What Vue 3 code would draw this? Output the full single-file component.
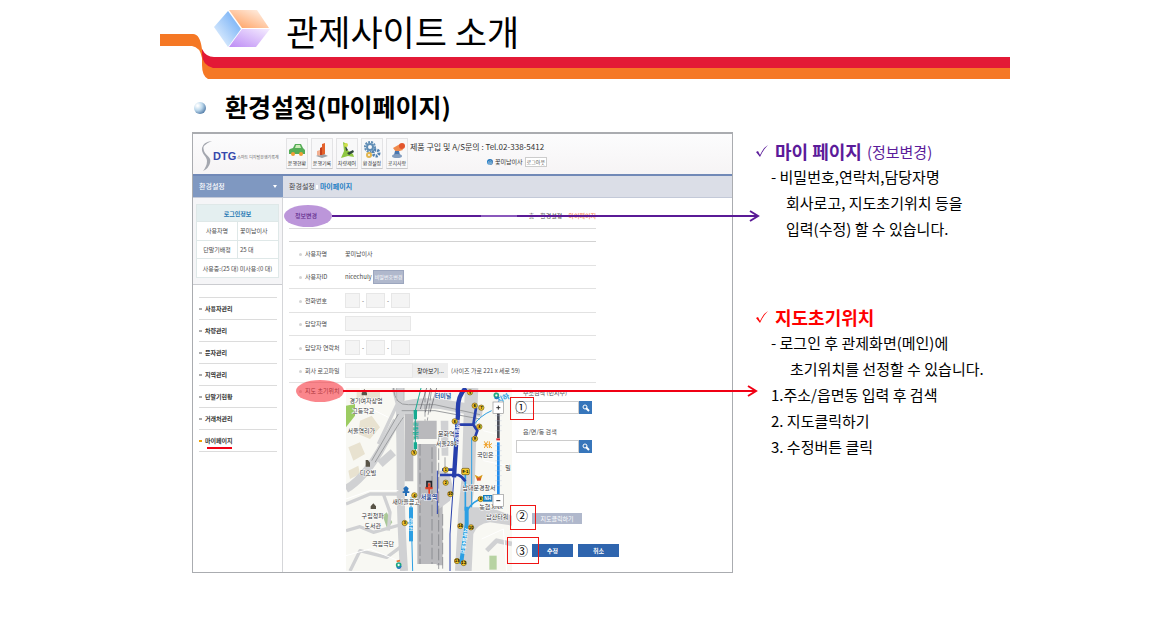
<script setup>
import { ref } from 'vue'

const shortcuts = ['운행현황', '운행기록', '차량제어', '환경설정', '공지사항']
const menu = ['사용자관리', '차량관리', '문자관리', '지역관리', '단말기현황', '거래처관리', '마이페이지']
const address = ref('')
const district = ref('')

const places = [
  { x: 78, y: 58, t: '경기여자상업' },
  { x: 70, y: 86, t: '고등학교' },
  { x: 64, y: 147, t: '서울역리가' },
  { x: 84, y: 274, t: '디오빌' },
  { x: 198, y: 360, t: '새마을금고' },
  { x: 98, y: 402, t: '구립청파' },
  { x: 98, y: 431, t: '도서관' },
  { x: 129, y: 485, t: '국립극단' },
  { x: 319, y: 157, t: '문화역' },
  { x: 319, y: 185, t: '서울284' },
  { x: 436, y: 219, t: '국민은' },
  { x: 417, y: 318, t: '남대문경찰서' },
  { x: 453, y: 376, t: '농협 XNX' },
  { x: 472, y: 405, t: '남산타워' },
  { x: 504, y: 258, t: '밀' }
]
const exits = [
  [390, 25, '5'], [404, 65, '6'], [424, 71, '7'], [344, 112, '8'], [418, 128, '8'], [405, 164, '9'],
  [222, 206, '5'], [317, 257, '1'], [317, 296, '2'], [331, 330, '10'], [223, 334, '4'], [194, 417, '3'],
  [361, 426, '14'], [393, 430, '10'], [351, 531, '13'], [371, 537, '12'], [422, 345, '8']
]
</script>

<template>
  <main class="slide">
    <header class="banner">
      <svg class="ribbon" width="850" height="80" viewBox="0 0 850 80" aria-hidden="true">
        <path fill="#f57825" d="M0 34H33Q40 34 42 49Q44 60 55 61H850V79H48Q42 76 42 65V58Q40 47 32 46H0Z" />
        <path fill="#e31936" d="M42 49Q46 57 54 57H850V68H53Q42 65 42 54Z" />
      </svg>
      <svg class="cube" width="56" height="38" viewBox="0 0 56 38" aria-hidden="true">
        <defs>
          <linearGradient id="cb" x1="1" y1="0" x2="0" y2="1"><stop offset="0" stop-color="#62a5f5" /><stop offset="1" stop-color="#f4faff" /></linearGradient>
          <linearGradient id="co" x1="0" y1="1" x2="1" y2="0"><stop offset="0" stop-color="#ff9a57" /><stop offset="1" stop-color="#fff8f2" /></linearGradient>
          <linearGradient id="cp" x1="0" y1="1" x2="1" y2="0"><stop offset="0" stop-color="#bd8cf5" /><stop offset="1" stop-color="#f5edff" /></linearGradient>
        </defs>
        <path fill="url(#cb)" d="M14 1L27 19L14 37L0 17Z" />
        <path fill="url(#co)" d="M15 0H43L55 18H28Z" />
        <path fill="url(#cp)" d="M28 19H56L42 37H15Z" />
      </svg>
      <h1>관제사이트 소개</h1>
    </header>

    <h2><i class="ball"></i>환경설정(마이페이지)</h2>

    <div class="body">
      <section class="app">
        <div class="app-top">
          <div class="brand">
            <svg width="12" height="32" viewBox="0 0 12 32" aria-hidden="true"><path d="M11 1Q0 5 3 11C5 16 11 17 9 23Q8 28 2 31Q6 26 6 21C6 16 0 14 1 8Q2 2 11 1Z" fill="#a4a7af" /></svg>
            <b>DTG</b><small>스마트 디지털운행기록계</small>
          </div>
          <nav class="shortcuts">
            <button v-for="(s, i) in shortcuts" :key="s" type="button">
              <svg width="18" height="18" viewBox="0 0 18 18" aria-hidden="true">
                <g v-if="i === 0"><path d="M2 8L5 7L7 3H13L15 7L17 9V13H1V9Z" fill="#55ad57" /><path d="M7 7L8 4H12L13 7Z" fill="#cdebb9" /><circle cx="5" cy="13" r="2" fill="#ef9d35" /><circle cx="13" cy="13" r="2" fill="#ef9d35" /></g>
                <g v-else-if="i === 1"><path d="M3 15L9 12L15 15L9 17Z" fill="#9da3aa" /><path d="M4 10L7 9V15L4 14Z" fill="#f2b092" /><path d="M9 3L12 2V13L9 14Z" fill="#e4622b" /><path d="M7 7L9 6V14H7Z" fill="#c4401f" /></g>
                <g v-else-if="i === 2"><path d="M5 1L9 3L8 8L15 13L16 16L10 15L3 17L6 10Z" fill="#8fc742" /><path d="M7 4L10 9L8 10ZM9 12L15 9L16 11L11 14Z" fill="#31493c" /><circle cx="8" cy="4" r="2" fill="#d0df4c" /></g>
                <g v-else-if="i === 3"><circle cx="7" cy="6" r="5" fill="none" stroke="#608db5" stroke-width="2" stroke-dasharray="2 1" /><circle cx="7" cy="6" r="3" fill="none" stroke="#608db5" stroke-width="2" /><circle cx="13" cy="12" r="3" fill="none" stroke="#4f80b0" stroke-width="3" stroke-dasharray="2 1" /><circle cx="6" cy="14" r="2" fill="none" stroke="#e2b650" stroke-width="2" /></g>
                <g v-else><path d="M5 7L12 3L15 9L8 11Z" fill="#f08a4d" /><circle cx="14" cy="5" r="3" fill="#e3562d" /><path d="M7 10H11L12 14H6Z" fill="#4a76ae" /><ellipse cx="9" cy="15" rx="5" ry="2" fill="#829dc0" /></g>
              </svg>
              {{ s }}
            </button>
          </nav>
          <div class="contact">
            <p>제품 구입 및 A/S문의 : Tel.02-338-5412</p>
            <p class="user"><i>@</i><span>꽃미남이사</span><button type="button">로그아웃</button></p>
          </div>
        </div>

        <div class="crumbs">
          <strong>환경설정<svg width="4" height="3" viewBox="0 0 4 3" aria-hidden="true"><path d="M0 0H4L2 3Z" fill="#fff" /></svg></strong>
          <p>환경설정 <i></i> <b>마이페이지</b></p>
        </div>

        <div class="app-main">
          <aside>
            <div class="login">
              <table>
                <thead><tr><th colspan="2">로그인정보</th></tr></thead>
                <tbody>
                  <tr><td class="key">사용자명</td><td>꽃미남이사</td></tr>
                  <tr><td class="key">단말기배정</td><td>25 대</td></tr>
                  <tr><td colspan="2" class="use">사용중:(25 대) 미사용:(0 대)</td></tr>
                </tbody>
              </table>
            </div>
            <ul>
              <li v-for="m in menu" :key="m"><a href="#" :class="{ on: m === '마이페이지' }"><span>{{ m }}</span></a></li>
            </ul>
          </aside>

          <form class="content" @submit.prevent>
            <div class="section-head"><b>정보변경</b><p>홈 · 환경설정 · <em>마이페이지</em></p></div>
            <div class="rows">
              <div class="row"><span class="name">사용자명</span><span>꽃미남이사</span></div>
              <div class="row"><span class="name">사용자ID</span><span>nicechuly</span><button type="button" class="pw">비밀번호변경</button></div>
              <div class="row"><label class="name" for="tel">전화번호</label><input id="tel" class="w1"><u>-</u><input class="w2" aria-label="전화번호 국번"><u>-</u><input class="w2" aria-label="전화번호 끝자리"></div>
              <div class="row"><label class="name" for="manager">담당자명</label><input id="manager" class="w3"></div>
              <div class="row"><label class="name" for="mtel">담당자 연락처</label><input id="mtel" class="w1"><u>-</u><input class="w2" aria-label="연락처 국번"><u>-</u><input class="w2" aria-label="연락처 끝자리"></div>
              <div class="row"><label class="name" for="logo">회사 로고파일</label><input id="logo" class="w4"><button type="button" class="browse">찾아보기...</button><small>(사이즈 가로 221 x 세로 59)</small></div>
            </div>

            <div class="map-row">
              <span class="name">지도 초기위치</span>
              <svg class="map" width="166" height="183" viewBox="18 12 498 549" role="img" aria-label="서울역 지도">
                <rect x="18" y="12" width="498" height="549" fill="#f8f8f3" />
                <g fill="#e8e2d0">
                  <path d="M60 110L95 95L120 130L90 165L55 150ZM25 190L60 175L75 210L40 230ZM50 20H120V45H50ZM25 260L55 245L60 270L30 285Z" />
                </g>
                <path d="M18 65L45 60V95L18 130Z" fill="#9ccc62" />
                <path d="M128 395L140 385L157 415L142 435Z" fill="#a9c899" />
                <path d="M448 515H470V557H448Z" fill="#b7d3a2" />
                <g fill="none" stroke="#d0d1d3" stroke-linejoin="round">
                  <path stroke-width="24" d="M180 12V120Q182 200 182 300T192 561" />
                  <path stroke-width="10" d="M160 12L172 60L115 180" />
                  <path stroke-width="24" d="M170 110L120 200Q70 285 18 315M120 240L160 205" />
                  <path stroke-width="10" d="M18 360L90 330H180M18 440L60 428L100 445L190 420M130 330L150 385L145 440M30 561L60 500L140 520L180 490" />
                  <path stroke-width="40" d="M395 12L390 120L385 280L375 380L365 561" />
                  <path stroke-width="14" d="M440 500L470 470L516 480" />
                </g>
                <path d="M395 370L450 370L516 395V425L450 415Q410 420 400 450L395 561H360L375 380Z" fill="#d0d1d3" />
                <path d="M180 55Q230 38 300 45L430 65L425 100L300 75Q230 65 200 110Z" fill="#d0d1d3" />
                <g fill="none" stroke="#fff" stroke-width="3">
                  <path d="M18 345L90 320H175M60 12L95 75L145 100M18 515L90 495L175 530M425 465L490 435L500 561M430 230L500 245M430 140L470 150" />
                </g>
                <g fill="none" stroke="#9c9ea0" stroke-width="3">
                  <path d="M160 12Q165 65 205 62H285L420 92M185 80H285L420 105M190 100Q175 120 105 235M175 90L95 230" />
                  <path d="M170 12V50M192 12V50" stroke="#bbb" />
                </g>
                <path d="M194 90H220V292H194ZM222 110H290V165H222ZM232 180H290V540H232ZM290 350H308V544H290Z" fill="#b9b9bc" />
                <path d="M290 260H320Q348 300 330 350L290 380Z" fill="#cfcfd2" />
                <path d="M302 110H325V215H305Z" fill="#d0d1d3" />
                <g fill="none" stroke="#77787e" stroke-width="2" stroke-dasharray="35 8"><path d="M240 180V540M255 20V110M275 15L262 110M276 190V540M296 150V555M315 220V270M308 390V561" /></g>
                <g fill="none" stroke="#57585f" stroke-width="2"><path d="M241 75L260 12M256 85L272 12M270 85L290 12" /></g>
                <g fill="none" stroke="#16aa91"><path stroke-width="3" d="M243 12L226 80V205" /><path stroke-width="10" d="M226 78V106M226 175V195" /></g>
                <g fill="none" stroke="#2c9fe3"><path stroke-width="3" d="M213 340V370L218 561M192 417H213M395 160V370M400 125Q420 95 455 80" /><path stroke-width="12" d="M213 370V472" /><path stroke-width="5" d="M430 342Q400 350 382 378" /><path stroke-width="5" d="M376 265V380" /><path stroke-width="12" d="M380 368V420L363 540" /></g>
                <g fill="none" stroke="#273fac"><path stroke-width="13" d="M378 12Q350 35 354 90L342 280" /><path stroke-width="8" d="M300 273H355Q368 278 376 292M306 257H340M348 122H400L408 72M400 122L412 140L405 160" /><path stroke-width="3" d="M342 275L330 450V561M292 260V390" /></g>
                <g font-family="'Noto Sans CJK KR', sans-serif" font-size="16" text-anchor="middle">
                  <g font-size="15" font-weight="700"><text x="222" y="141" fill="#16aa91" transform="rotate(90 222 141)">공항철도</text><text x="346" y="145" fill="#fff" transform="rotate(92 346 145)">지하철1호선</text><text x="208" y="421" fill="#fff" transform="rotate(90 208 421)">경의선</text><text x="368" y="470" fill="#fff" transform="rotate(98 368 470)">지하철4호선</text><text x="492" y="50" font-size="22" fill="#2c9fe3" transform="rotate(-25 492 50)">지하</text></g>
                  <g fill="#333" stroke="#fff" stroke-width="3" paint-order="stroke">
                    <text v-for="p in places" :key="p.t" :x="p.x" :y="p.y" font-size="18">{{ p.t }}</text>
                    <text x="309" y="41" font-size="18" font-weight="700" fill="#19549a">터미널</text>
                    <text x="267" y="346" font-size="18" font-weight="700" fill="#244591">서울역</text>
                  </g>
                  <g v-for="e in exits" :key="e[0] + '-' + e[1]"><circle :cx="e[0]" :cy="e[1]" r="8" fill="#f4ca2d" stroke="#705715" stroke-width="2" /><text :x="e[0]" :y="e[1] + 4" font-size="12" font-weight="700">{{ e[2] }}</text></g>
                  <rect x="365" y="253" width="23" height="19" rx="4" fill="#f4ca2d" stroke="#705715" stroke-width="2" /><text x="376" y="267" font-size="12" font-weight="700">9-1</text>
                </g>
                <g fill="#595447"><path d="M65 27L73 15L81 27V34H65ZM77 244V228H84L90 236V248H77ZM92 375V367L100 358L108 367V375Z" /></g>
                <path d="M256 308H278V316H270V329H265V316H256Z" fill="#e44227" /><path d="M261 310V293H274V310" fill="none" stroke="#23242a" stroke-width="5" /><path d="M264 298H271V308H264Z" fill="#e44227" />
                <path d="M198 306L206 313L203 322H208V327H201V336H195V327H188V322H193L190 313Z" fill="#246eb7" />
                <g fill="none" stroke-width="5"><circle cx="176" cy="543" r="6" stroke="#1da783" /><path d="M171 549Q178 558 183 546" stroke="#2278c1" /><path d="M170 532L180 530" stroke="#e87232" /><circle cx="469" cy="34" r="6" stroke="#1da783" /><path d="M464 40Q471 48 476 38" stroke="#2278c1" /><path d="M464 23L474 21" stroke="#e87232" /></g>
                <path d="M433 172L443 192M443 172L433 192M431 182H446M448 172V192M448 185L456 178M448 185L456 192" fill="none" stroke="#efa027" stroke-width="3" />
                <path d="M404 272L416 278L428 272L422 288H411Z" fill="#d79a18" /><path d="M411 281H422V290H411Z" fill="#d9532c" />
                <rect x="429" y="333" width="28" height="20" fill="#167bbb" /><text x="443" y="348" font-family="sans-serif" font-size="14" font-weight="700" fill="#fff" text-anchor="middle">NH</text>
                <rect x="471" y="86" width="8" height="76" fill="#4b4d57" /><rect x="471" y="175" width="8" height="157" fill="#228ced" /><path d="M465 95H485M465 110H485M465 125H485M465 140H485M465 185H485M465 200H485M465 215H485M465 230H485M465 245H485M465 260H485M465 275H485M465 290H485M465 305H485" stroke="#a9bad0" stroke-width="1" /><rect x="469" y="163" width="11" height="6" fill="#d9232c" />
                <g fill="#fff" stroke="#969696" stroke-width="2"><rect x="459" y="54" width="31" height="34" /><rect x="459" y="331" width="31" height="36" /></g><path d="M469 71H481M475 65V77M469 350H481" stroke="#333" stroke-width="3" />
              </svg>
              <div class="find">
                <label for="addr">주소검색 (번지수)</label>
                <div class="search"><input id="addr" v-model="address"><button type="button" aria-label="주소 검색"><svg width="8" height="8" viewBox="0 0 8 8"><circle cx="3" cy="3" r="2" fill="none" stroke="#fff" /><path d="M4 4L7 7" stroke="#fff" stroke-width="2" /></svg></button></div>
                <label for="dong" class="second">읍/면/동 검색</label>
                <div class="search"><input id="dong" v-model="district"><button type="button" aria-label="읍/면/동 검색"><svg width="8" height="8" viewBox="0 0 8 8"><circle cx="3" cy="3" r="2" fill="none" stroke="#fff" /><path d="M4 4L7 7" stroke="#fff" stroke-width="2" /></svg></button></div>
                <button type="button" class="pick">지도클릭하기</button>
                <div class="actions"><button type="submit">수정</button><button type="button">취소</button></div>
              </div>
            </div>
          </form>
        </div>
      </section>

      <section class="notes">
        <article class="mypage">
          <h3><svg width="14" height="14" viewBox="0 0 14 14" aria-hidden="true"><path d="M1 8L3 7L5 11Q8 4 13 1Q8 6 5 13Z" fill="currentColor" /></svg>마이 페이지<small>(정보변경)</small></h3>
          <p>- 비밀번호,연락처,담당자명</p>
          <p class="in">회사로고, 지도초기위치 등을</p>
          <p class="in">입력(수정) 할 수 있습니다.</p>
        </article>
        <article class="start">
          <h3><svg width="14" height="14" viewBox="0 0 14 14" aria-hidden="true"><path d="M1 8L3 7L5 11Q8 4 13 1Q8 6 5 13Z" fill="currentColor" /></svg>지도초기위치</h3>
          <p>- 로그인 후 관제화면(메인)에</p>
          <p class="in more">초기위치를 선정할 수 있습니다.</p>
          <p>1.주소/읍면동 입력 후 검색</p>
          <p>2. 지도클릭하기</p>
          <p>3. 수정버튼 클릭</p>
        </article>
      </section>
    </div>

    <svg class="marks" width="850" height="637" viewBox="160 0 850 637" aria-hidden="true">
      <ellipse cx="308" cy="216" rx="24" ry="11" fill="#7a2db5" opacity=".5" />
      <ellipse cx="320" cy="391" rx="24" ry="11" fill="#f5222d" opacity=".55" />
      <path d="M332 216H481M517 216H758" stroke="#5a1a96" stroke-width="2" /><path d="M481 216H517" stroke="#8a58bc" stroke-width="2" />
      <path d="M750 211L758 216L750 221" fill="none" stroke="#5a1a96" stroke-width="2" />
      <path d="M343 391H756" stroke="#f00014" stroke-width="2" /><path d="M748 386L756 391L748 396" fill="none" stroke="#f00014" stroke-width="2" />
      <path d="M207 448H232" stroke="#f00014" stroke-width="2" />
      <g fill="none" stroke="#f01414"><rect x="510.500" y="397.500" width="23" height="22" /><rect x="510.500" y="505.500" width="25" height="24" /><rect x="507.500" y="537.500" width="31" height="26" /></g>
      <g font-family="'Noto Sans CJK KR', sans-serif" font-size="12" text-anchor="middle"><text x="521" y="412">①</text><text x="522" y="521">②</text><text x="522" y="556">③</text></g>
    </svg>
  </main>
</template>

<style>
body { margin: 0; background: #fff; }
</style>

<style scoped>
* { box-sizing: border-box; }
.slide { position: relative; max-width: 850px; margin: 0 auto; font-family: "Noto Sans CJK KR", "Liberation Sans", sans-serif; color: #000; }
h1, h2, h3, p, ul { margin: 0; padding: 0; font-weight: 400; }
button, input { font: inherit; margin: 0; padding: 0; border: 0; border-radius: 0; min-width: 0; }
button { white-space: nowrap; }
i, em { font-style: normal; }
u { text-decoration: none; }
.banner { position: relative; display: flex; align-items: flex-start; height: 80px; padding: 10px 0 0 54px; }
.ribbon { position: absolute; left: 0; top: 0; }
.cube { position: relative; }
h1 { position: relative; margin-left: 16px; font-size: 35px; line-height: 42px; font-weight: 400; }
h2 { display: flex; align-items: center; height: 52px; padding-left: 34px; font-size: 25px; font-weight: 700; }
.ball { width: 12px; height: 12px; margin: 4px 19px 0 0; border-radius: 50%; background: radial-gradient(circle at 30% 30%, #fff 5%, #bcd8ec 40%, #315f92 90%); }
.body { display: flex; align-items: flex-start; padding-left: 32px; }

.app { width: 541px; flex: none; border: 1px solid #aaacb0; border-top-width: 2px; font-size: 6px; line-height: 9px; color: #4b4b4b; }
.app-top { display: flex; height: 42px; background: linear-gradient(#fcfcfd, #f6f4f5); border-bottom: 2px solid #7189b7; }
.brand { display: flex; align-items: center; width: 93px; padding: 4px 0 0 8px; white-space: nowrap; }
.brand svg { flex: none; }
.brand b { font: 700 11px/16px "Liberation Sans", sans-serif; color: #3548ab; }
.brand small { margin: 3px 0 0 1px; font-size: 4px; color: #666; }
.shortcuts { display: flex; gap: 3px; padding-top: 4px; }
.shortcuts button { display: flex; flex-direction: column; align-items: center; width: 22px; height: 31px; padding-top: 2px; border: 1px solid #e3e3e5; border-bottom-color: #c8c8ca; background: #f8f8f9; font-size: 5px; line-height: 8px; color: #333; }
.contact { width: 137px; margin-left: 2px; padding-top: 8px; font-size: 8px; line-height: 10px; white-space: nowrap; color: #333; }
.user { display: flex; justify-content: flex-end; align-items: center; gap: 2px; margin-top: 5px; font-size: 6px; }
.user i { width: 6px; height: 6px; border-radius: 50%; background: #2375b9; color: #fff; font-size: 5px; line-height: 6px; text-align: center; }
.user button { height: 10px; padding: 0 1px; border: 1px solid #ccc; background: #fff; font-size: 5px; line-height: 8px; color: #555; }
.crumbs { display: flex; height: 22px; align-items: stretch; background: #dbdee7; border-bottom: 1px solid #c3c9d8; font-size: 7px; line-height: 21px; }
.crumbs strong { display: flex; justify-content: space-between; align-items: center; width: 90px; padding: 0 6px; background: #7f98c1; color: #fff; font-weight: 500; }
.crumbs p { padding-left: 6px; }
.crumbs p i { display: inline-block; width: 2px; height: 4px; background: #fff; }
.crumbs p b { color: #277fc4; }
.app-main { display: flex; align-items: stretch; height: 374px; overflow: hidden; }
aside { width: 90px; flex: none; border-right: 1px solid #d5d6d9; }
.login { height: 87px; padding: 6px 3px 0; background: #f5f5f7; border-bottom: 1px solid #cbccd0; }
table { width: 100%; height: 74px; table-layout: fixed; border-collapse: collapse; background: #fff; border: 1px solid #b9d3d6; white-space: nowrap; }
th, td { padding: 0 0 0 2px; border: 1px solid #dfe8e8; font-weight: 400; text-align: left; }
th { height: 17px; padding: 0; background: #e4eff0; color: #2176b3; font-weight: 700; text-align: center; }
td.key { padding: 0; text-align: center; }
td.use { padding: 0; text-align: center; }
ul { margin: 12px 5px 0 6px; border-top: 1px solid #dcdcdc; list-style: none; }
li { height: 22px; border-bottom: 1px solid #dcdcdc; }
a { display: flex; align-items: center; height: 21px; gap: 3px; color: #333; font-weight: 700; text-decoration: none; }
a::before { content: ""; width: 3px; height: 2px; background: #aaa; }
a.on::before { background: #f0a000; }

.content { width: 313px; padding-left: 6px; flex: none; }
.section-head { display: flex; justify-content: space-between; align-items: center; height: 31px; padding: 4px 0 0 6px; border-bottom: 1px solid #dcdcdc; }
.section-head b { font-weight: 500; color: #42265d; }
.section-head em { color: #f0662c; }
.rows { display: grid; grid-template-rows: repeat(6, 1fr); height: 142px; margin-top: 12px; border-top: 1px solid #d2d2d2; }
.row { display: flex; align-items: center; border-bottom: 1px solid #e2e2e2; white-space: nowrap; }
.name { flex: none; width: 56px; padding-left: 10px; white-space: nowrap; }
.name::before { content: ""; display: inline-block; width: 3px; height: 3px; margin-right: 3px; border-radius: 50%; background: #d4d4d4; }
.row input { height: 15px; border: 1px solid #e7e7e7; background: #f4f4f4; }
.row u { width: 6px; text-align: center; }
.w1 { width: 15px; }
.w2 { width: 19px; }
.w3 { width: 66px; }
.w4 { width: 68px; }
.pw { height: 14px; padding: 0 1px; margin-left: 1px; border: 1px solid #9ca6be; background: #b0b8cc; color: #fff; font-size: 5px; }
.browse { width: 35px; height: 15px; background: #eee; color: #222; }
.row small { margin-left: 3px; font-size: 6px; }
.map-row { display: flex; width: 340px; }
.map-row .name { padding-top: 3px; }
.map { flex: none; margin: 5px 0 0 1px; }
.find { width: 110px; padding: 5px 0 0 4px; }
.find label { display: block; padding-left: 7px; line-height: 9px; }
.find .second { margin-top: 13px; }
.search { display: flex; width: 76px; height: 13px; margin-top: 4px; }
.search input { flex: 1; border: 1px solid #ccc; background: #fff; }
.search button { display: grid; place-items: center; width: 13px; background: #3776bb; }
.find .pick { display: block; width: 50px; height: 11px; margin: 60px 0 0 16px; background: #b0b8cc; color: #fff; font-size: 6px; }
.actions { display: flex; gap: 5px; margin: 20px 0 0 16px; }
.actions button { width: 41px; height: 13px; background: #2f65ae; color: #fff; font-weight: 700; line-height: 13px; }

.notes { flex: 1; padding: 6px 0 0 22px; white-space: nowrap; }
.notes h3 { display: flex; align-items: center; height: 26px; font-size: 18px; font-weight: 700; }
.notes h3 svg { margin-right: 6px; }
.notes h3 small { margin-left: 5px; font-size: 15px; font-weight: 400; }
.notes p { padding-left: 16px; font-size: 15px; line-height: 26px; }
.notes .in { padding-left: 31px; }
.notes .more { padding-left: 35px; }
.mypage h3 { color: #5b1b9a; }
.start h3 { color: #f00; }
.start { margin-top: 62px; }
.marks { position: absolute; left: 0; top: 0; pointer-events: none; }
</style>
